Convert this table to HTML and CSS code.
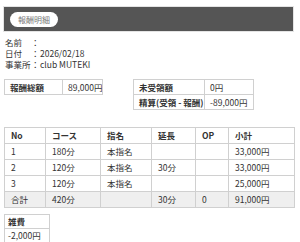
FILE: index.html
```html
<!DOCTYPE html>
<html lang="ja">
<head>
<meta charset="utf-8">
<link rel="stylesheet" href="styles.css">
</head>
<body>
<div class="page">
  <div class="titlebar"><span class="badge">報酬明細</span></div>
  <div class="info">
    <div class="line"><span class="lbl">名前</span><span class="sep">：</span><span class="val"></span></div>
    <div class="line"><span class="lbl">日付</span><span class="sep">：</span><span class="val">2026/02/18</span></div>
    <div class="line"><span class="lbl">事業所</span><span class="sep">：</span><span class="val">club MUTEKI</span></div>
  </div>
  <div class="summary">
    <table class="grid sum-left">
      <colgroup><col class="c1"><col class="c2"></colgroup>
      <tr><th>報酬総額</th><td>89,000円</td></tr>
    </table>
    <table class="grid sum-right">
      <colgroup><col class="c1"><col class="c2"></colgroup>
      <tr><th>未受領額</th><td>0円</td></tr>
      <tr><th>精算(受領 - 報酬)</th><td>-89,000円</td></tr>
    </table>
  </div>
  <table class="grid main">
    <colgroup>
      <col class="m1"><col class="m2"><col class="m3"><col class="m4"><col class="m5"><col class="m6">
    </colgroup>
    <tr class="head"><th>No</th><th>コース</th><th>指名</th><th>延長</th><th>OP</th><th>小計</th></tr>
    <tr><td>1</td><td>180分</td><td>本指名</td><td></td><td></td><td>33,000円</td></tr>
    <tr><td>2</td><td>120分</td><td>本指名</td><td>30分</td><td></td><td>33,000円</td></tr>
    <tr><td>3</td><td>120分</td><td>本指名</td><td></td><td></td><td>25,000円</td></tr>
    <tr class="total"><td>合計</td><td>420分</td><td></td><td>30分</td><td>0</td><td>91,000円</td></tr>
  </table>
  <table class="grid misc">
    <tr><th>雑費</th></tr>
    <tr><td>-2,000円</td></tr>
  </table>
</div>
</body>
</html>
```
FILE: styles.css
```css
html, body {
  margin: 0;
  padding: 0;
  background: #fff;
}
body {
  font-family: "Noto Sans CJK JP", "Noto Sans", sans-serif;
  font-size: 8.5px;
  color: #333;
}
.page {
  padding: 6px 6px 0 3px;
}
.titlebar {
  background: #555;
  height: 26px;
  display: flex;
  align-items: center;
  padding-left: 6px;
  border: 1px solid #e4e4e4;
  box-sizing: border-box;
}
.badge {
  background: #fff;
  color: #777;
  border-radius: 8px;
  height: 15px;
  line-height: 15px;
  padding: 0 8px;
  font-size: 8px;
}
.info {
  padding: 5px 0 0 2px;
}
.line {
  display: flex;
  height: 11px;
  line-height: 11px;
}
.lbl {
  width: 26px;
}
.sep {
  width: 9px;
}
.summary {
  display: flex;
  gap: 30px;
  margin-top: 9px;
  margin-left: 1px;
  align-items: flex-start;
}
.grid {
  border-collapse: collapse;
  table-layout: fixed;
}
.grid th, .grid td {
  border: 1px solid #d0d0d0;
  text-align: left;
  padding: 0 0 0 5px;
  height: 14px;
  line-height: 14px;
  white-space: nowrap;
  overflow: hidden;
}
.grid th {
  font-weight: bold;
}
.sum-left { width: 98px; }
.sum-left .c1 { width: 58px; }
.sum-left .c2 { width: 40px; }
.sum-right { width: 120px; }
.sum-right .c1 { width: 71px; }
.sum-right .c2 { width: 49px; }
.main {
  width: 290px;
  margin-top: 17px;
  margin-left: 1px;
}
.main th, .main td {
  height: 15px;
  line-height: 15px;
  padding-left: 6px;
}
.m1 { width: 41px; }
.m2 { width: 55px; }
.m3 { width: 51px; }
.m4 { width: 44px; }
.m5 { width: 33px; }
.m6 { width: 66px; }
.main .total td {
  background: #efefef;
}
.misc {
  width: 46px;
  margin-top: 6px;
  margin-left: 1px;
}
.misc th, .misc td {
  padding-left: 3px;
  height: 13px;
  line-height: 13px;
}
```
